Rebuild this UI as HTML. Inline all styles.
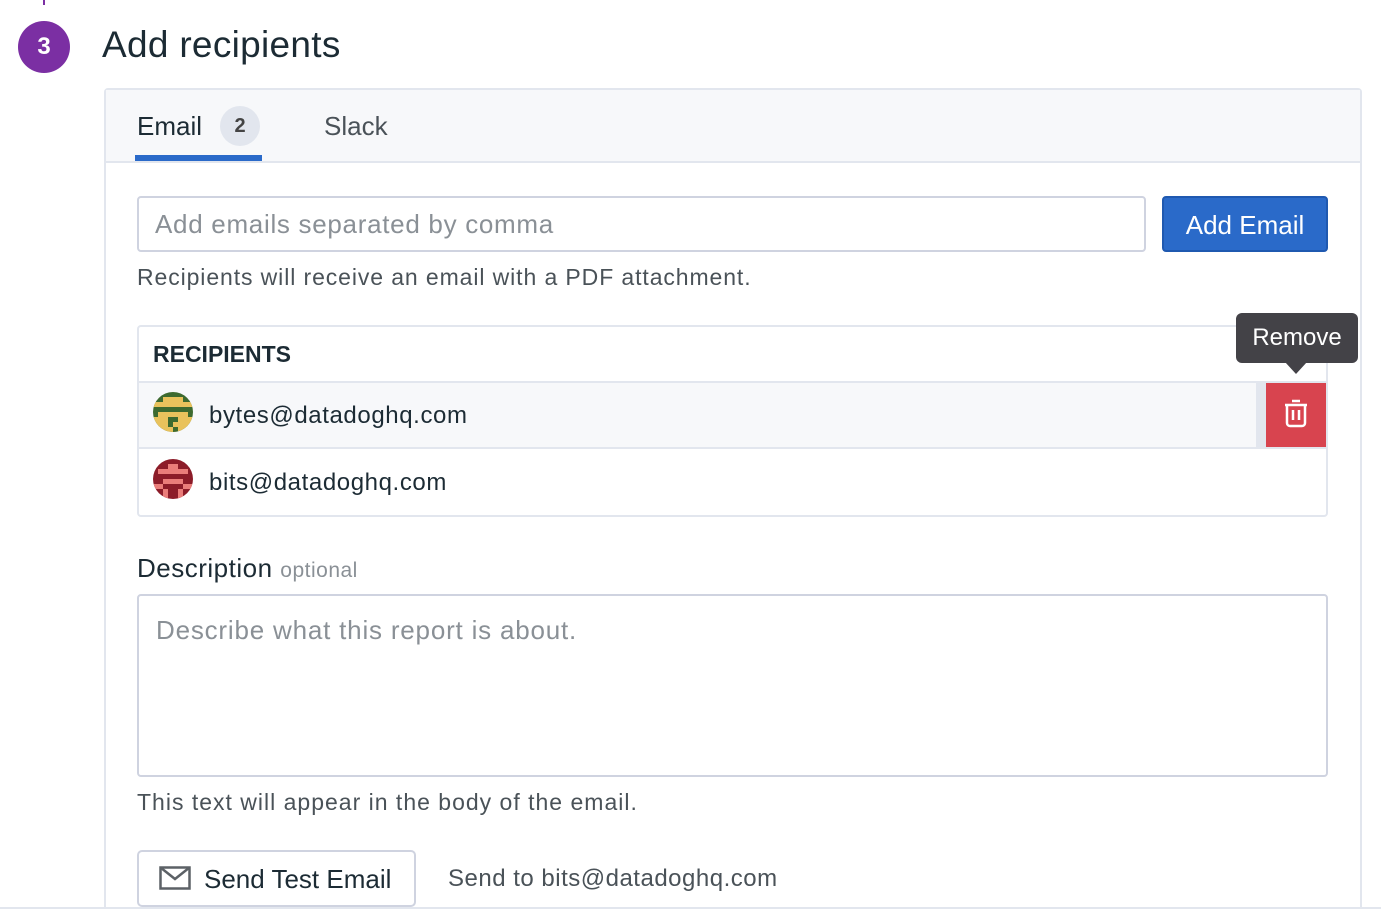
<!DOCTYPE html>
<html><head><style>
*{box-sizing:border-box;margin:0;padding:0}
html,body{width:1381px;height:924px;overflow:hidden}
body{background:#fff;font-family:"Liberation Sans",sans-serif;color:#1c2b34;position:relative}
.abs{position:absolute}
</style></head><body>
<div class="abs" style="left:43px;top:0;width:2px;height:5px;background:#7b2fa3"></div>
<div class="abs" style="left:18px;top:21px;width:52px;height:52px;border-radius:50%;background:#7b2fa3;color:#fff;font-weight:bold;font-size:24px;text-align:center;line-height:52px">3</div>
<div class="abs" style="left:102px;top:24px;font-size:37px;letter-spacing:0.3px;color:#1c2b34">Add recipients</div>

<div class="abs" style="left:104px;top:88px;width:1258px;height:830px;border:2px solid #e2e6ee;border-radius:4px"></div>
<div class="abs" style="left:106px;top:90px;width:1254px;height:73px;background:#f7f8fa;border-bottom:2px solid #e2e6ee"></div>
<div class="abs" style="left:137px;top:111px;font-size:26px">Email</div>
<div class="abs" style="left:220px;top:106px;width:40px;height:40px;border-radius:50%;background:#e2e6ee;font-size:20px;font-weight:bold;text-align:center;line-height:40px;color:#444">2</div>
<div class="abs" style="left:135px;top:155px;width:127px;height:6px;background:#2a6ac9"></div>
<div class="abs" style="left:324px;top:111px;font-size:26px;color:#4a5258">Slack</div>

<div class="abs" style="left:137px;top:196px;width:1009px;height:56px;border:2px solid #cfd3e0;border-radius:4px;font-size:26px;letter-spacing:0.7px;color:#8a9096;padding:11px 0 0 16px">Add emails separated by comma</div>
<div class="abs" style="left:1162px;top:196px;width:166px;height:56px;border-radius:4px;background:#2a6ac9;border:2px solid #1f59b0;color:#fff;font-size:26px;text-align:center;line-height:54px">Add Email</div>
<div class="abs" style="left:137px;top:264px;font-size:23px;letter-spacing:0.9px;color:#4a5258">Recipients will receive an email with a PDF attachment.</div>

<div class="abs" style="left:137px;top:325px;width:1191px;height:192px;border:2px solid #e2e6ee;border-radius:4px"></div>
<div class="abs" style="left:153px;top:341px;font-size:23px;font-weight:bold;color:#1c2b34">RECIPIENTS</div>
<div class="abs" style="left:139px;top:381px;width:1187px;height:2px;background:#e2e6ee"></div>
<div class="abs" style="left:139px;top:383px;width:1117px;height:64px;background:#f7f8fa"></div>
<div class="abs" style="left:1256px;top:383px;width:10px;height:64px;background:#e2e6ee"></div>
<div class="abs" style="left:139px;top:447px;width:1187px;height:2px;background:#e2e6ee"></div>
<div class="abs" style="left:1266px;top:383px;width:60px;height:64px;background:#d8444f"></div>
<svg class="abs" style="left:1282px;top:399px" width="28" height="30" viewBox="0 0 28 30" fill="none" stroke="#fff" stroke-width="2.5"><path d="M10 2h8M3 6h22M5 6v18a3 3 0 0 0 3 3h12a3 3 0 0 0 3-3V6M11 11v10M17 11v10"/></svg>

<div class="abs" style="left:1236px;top:313px;width:122px;height:50px;border-radius:6px;background:#434247;color:#fff;font-size:24px;text-align:center;line-height:50px">Remove</div>
<div class="abs" style="left:1285px;top:362px;width:0;height:0;border-left:11px solid transparent;border-right:11px solid transparent;border-top:12px solid #434247"></div>

<svg class="abs" style="left:153px;top:392px" width="40" height="40" viewBox="0 0 40 40"><defs><clipPath id="c"><circle cx="20" cy="20" r="20"/></clipPath></defs><g clip-path="url(#c)"><rect width="40" height="40" fill="#3d6a2f"/><rect x="10" y="5" width="20" height="5" fill="#e9c25c"/><rect x="0" y="10" width="40" height="5" fill="#e9c25c"/><rect x="5" y="20" width="30" height="5" fill="#e9c25c"/><rect x="0" y="25" width="15" height="5" fill="#e9c25c"/><rect x="25" y="25" width="15" height="5" fill="#e9c25c"/><rect x="0" y="30" width="40" height="10" fill="#e9c25c"/><rect x="15" y="30" width="5" height="5" fill="#3d6a2f"/><rect x="20" y="35" width="5" height="5" fill="#3d6a2f"/></g></svg>
<div class="abs" style="left:209px;top:402px;font-size:24px;letter-spacing:0.6px">bytes@datadoghq.com</div>

<svg class="abs" style="left:153px;top:459px" width="40" height="40" viewBox="0 0 40 40"><defs><clipPath id="d"><circle cx="20" cy="20" r="20"/></clipPath></defs><g clip-path="url(#d)"><rect width="40" height="40" fill="#8c1c29"/><rect x="15" y="5" width="10" height="5" fill="#ea7d7a"/><rect x="5" y="10" width="30" height="5" fill="#ea7d7a"/><rect x="10" y="20" width="20" height="5" fill="#ea7d7a"/><rect x="0" y="25" width="10" height="5" fill="#ea7d7a"/><rect x="30" y="25" width="10" height="5" fill="#ea7d7a"/><rect x="10" y="30" width="5" height="10" fill="#ea7d7a"/><rect x="25" y="30" width="5" height="10" fill="#ea7d7a"/></g></svg>
<div class="abs" style="left:209px;top:469px;font-size:24px;letter-spacing:0.6px">bits@datadoghq.com</div>

<div class="abs" style="left:137px;top:553px;font-size:26px;letter-spacing:0.5px">Description <span style="font-size:21px;color:#8a9096">optional</span></div>
<div class="abs" style="left:137px;top:594px;width:1191px;height:183px;border:2px solid #cfd3e0;border-radius:4px;font-size:26px;letter-spacing:0.8px;color:#8a9096;padding:19px 0 0 17px">Describe what this report is about.</div>
<div class="abs" style="left:137px;top:789px;font-size:23px;letter-spacing:1px;color:#4a5258">This text will appear in the body of the email.</div>

<div class="abs" style="left:137px;top:850px;width:279px;height:57px;border:2px solid #cfd3e0;border-radius:5px;background:#fff"></div>
<svg class="abs" style="left:159px;top:866px" width="32" height="24" viewBox="0 0 32 24" fill="none" stroke="#5c6166" stroke-width="2.5"><rect x="1.5" y="1.5" width="29" height="21"/><path d="M1.5 1.5L16 13 30.5 1.5"/></svg>
<div class="abs" style="left:204px;top:864px;font-size:26px">Send Test Email</div>
<div class="abs" style="left:448px;top:865px;font-size:24px;letter-spacing:0.5px;color:#4a5258">Send to bits@datadoghq.com</div>

<div class="abs" style="left:0;top:907px;width:1381px;height:17px;background:#fff;border-top:2px solid #e2e6ee"></div>
</body></html>
